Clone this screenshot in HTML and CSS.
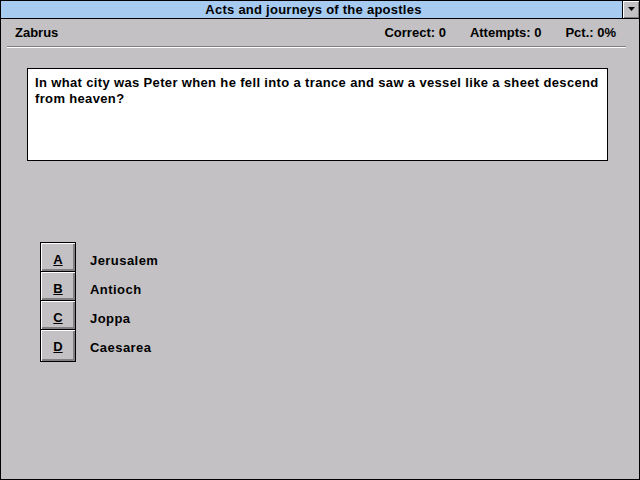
FILE: index.html
```html
<!DOCTYPE html>
<html>
<head>
<meta charset="utf-8">
<link rel="stylesheet" href="styles.css">
</head>
<body>
<div class="window">
  <div class="titlebar">
    <div class="title">Acts and journeys of the apostles</div>
    <div class="dropbtn"><svg width="9" height="5" viewBox="0 0 9 5"><polygon points="1,0 8,0 4.5,4" fill="#000"/></svg></div>
  </div>
  <div class="header">
    <div class="player">Zabrus</div>
    <div class="stats">
      <span class="stat-correct">Correct: 0</span>
      <span class="stat-attempts">Attempts: 0</span>
      <span class="stat-pct">Pct.: 0%</span>
    </div>
  </div>
  <div class="separator"></div>
  <div class="question">In what city was Peter when he fell into a trance and saw a vessel like a sheet descend from heaven?</div>
  <div class="answers">
    <div class="answer"><div class="btn"><u>A</u></div><div class="label">Jerusalem</div></div>
    <div class="answer"><div class="btn"><u>B</u></div><div class="label">Antioch</div></div>
    <div class="answer"><div class="btn"><u>C</u></div><div class="label">Joppa</div></div>
    <div class="answer last"><div class="btn"><u>D</u></div><div class="label">Caesarea</div></div>
  </div>
</div>
</body>
</html>
```
FILE: styles.css
```css
html, body {
  margin: 0;
  padding: 0;
}
body {
  font-family: "Liberation Sans", Arial, sans-serif;
  font-weight: bold;
  font-size: 12px;
  color: #000;
}
.window {
  width: 640px;
  height: 480px;
  box-sizing: border-box;
  border: 1px solid #000;
  background: #c3c1c3;
  display: flex;
  flex-direction: column;
}
.titlebar {
  height: 17px;
  background: #a6caf0;
  border-bottom: 1px solid #000;
  display: flex;
}
.title {
  flex: 1;
  text-align: center;
  line-height: 17px;
  font-size: 13px;
  letter-spacing: 0.25px;
  padding-left: 4px;
}
.dropbtn {
  width: 17px;
  height: 17px;
  box-sizing: border-box;
  border-left: 1px solid #000;
  background: #c3c1c3;
  box-shadow: inset 1px 1px 0 #fff, inset -1px -1px 0 #808080;
  display: flex;
  align-items: center;
  justify-content: center;
}
.header {
  display: flex;
  justify-content: space-between;
  height: 27px;
  line-height: 27px;
  padding: 0 23px 0 14px;
  font-size: 13px;
}
.stats {
  display: flex;
  gap: 24px;
}
.separator {
  margin: 0 13px 0 6px;
  height: 1px;
  border-top: 1px solid #808080;
  background: #fff;
}
.question {
  margin: 20px 0 0 26px;
  width: 581px;
  height: 93px;
  box-sizing: border-box;
  border: 1px solid #000;
  background: #fff;
  padding: 6px 7px;
  line-height: 16px;
  font-size: 13px;
  letter-spacing: 0.35px;
}
.answers {
  margin: 81px 0 0 39px;
  display: flex;
  flex-direction: column;
}
.answer {
  display: flex;
  align-items: flex-start;
  height: 29px;
}
.answer.last {
  height: 32px;
}
.btn {
  width: 36px;
  height: 30px;
  box-sizing: border-box;
  border: 1px solid #000;
  box-shadow: inset 1px 1px 0 #fff, inset -2px -2px 0 #808080;
  background: #c3c1c3;
  text-align: center;
  padding-top: 3px;
  line-height: 28px;
  font-size: 13px;
}
.answer.last .btn {
  height: 33px;
}
.label {
  margin-left: 14px;
  padding-top: 5px;
  line-height: 28px;
  font-size: 13px;
  letter-spacing: 0.45px;
}
```
